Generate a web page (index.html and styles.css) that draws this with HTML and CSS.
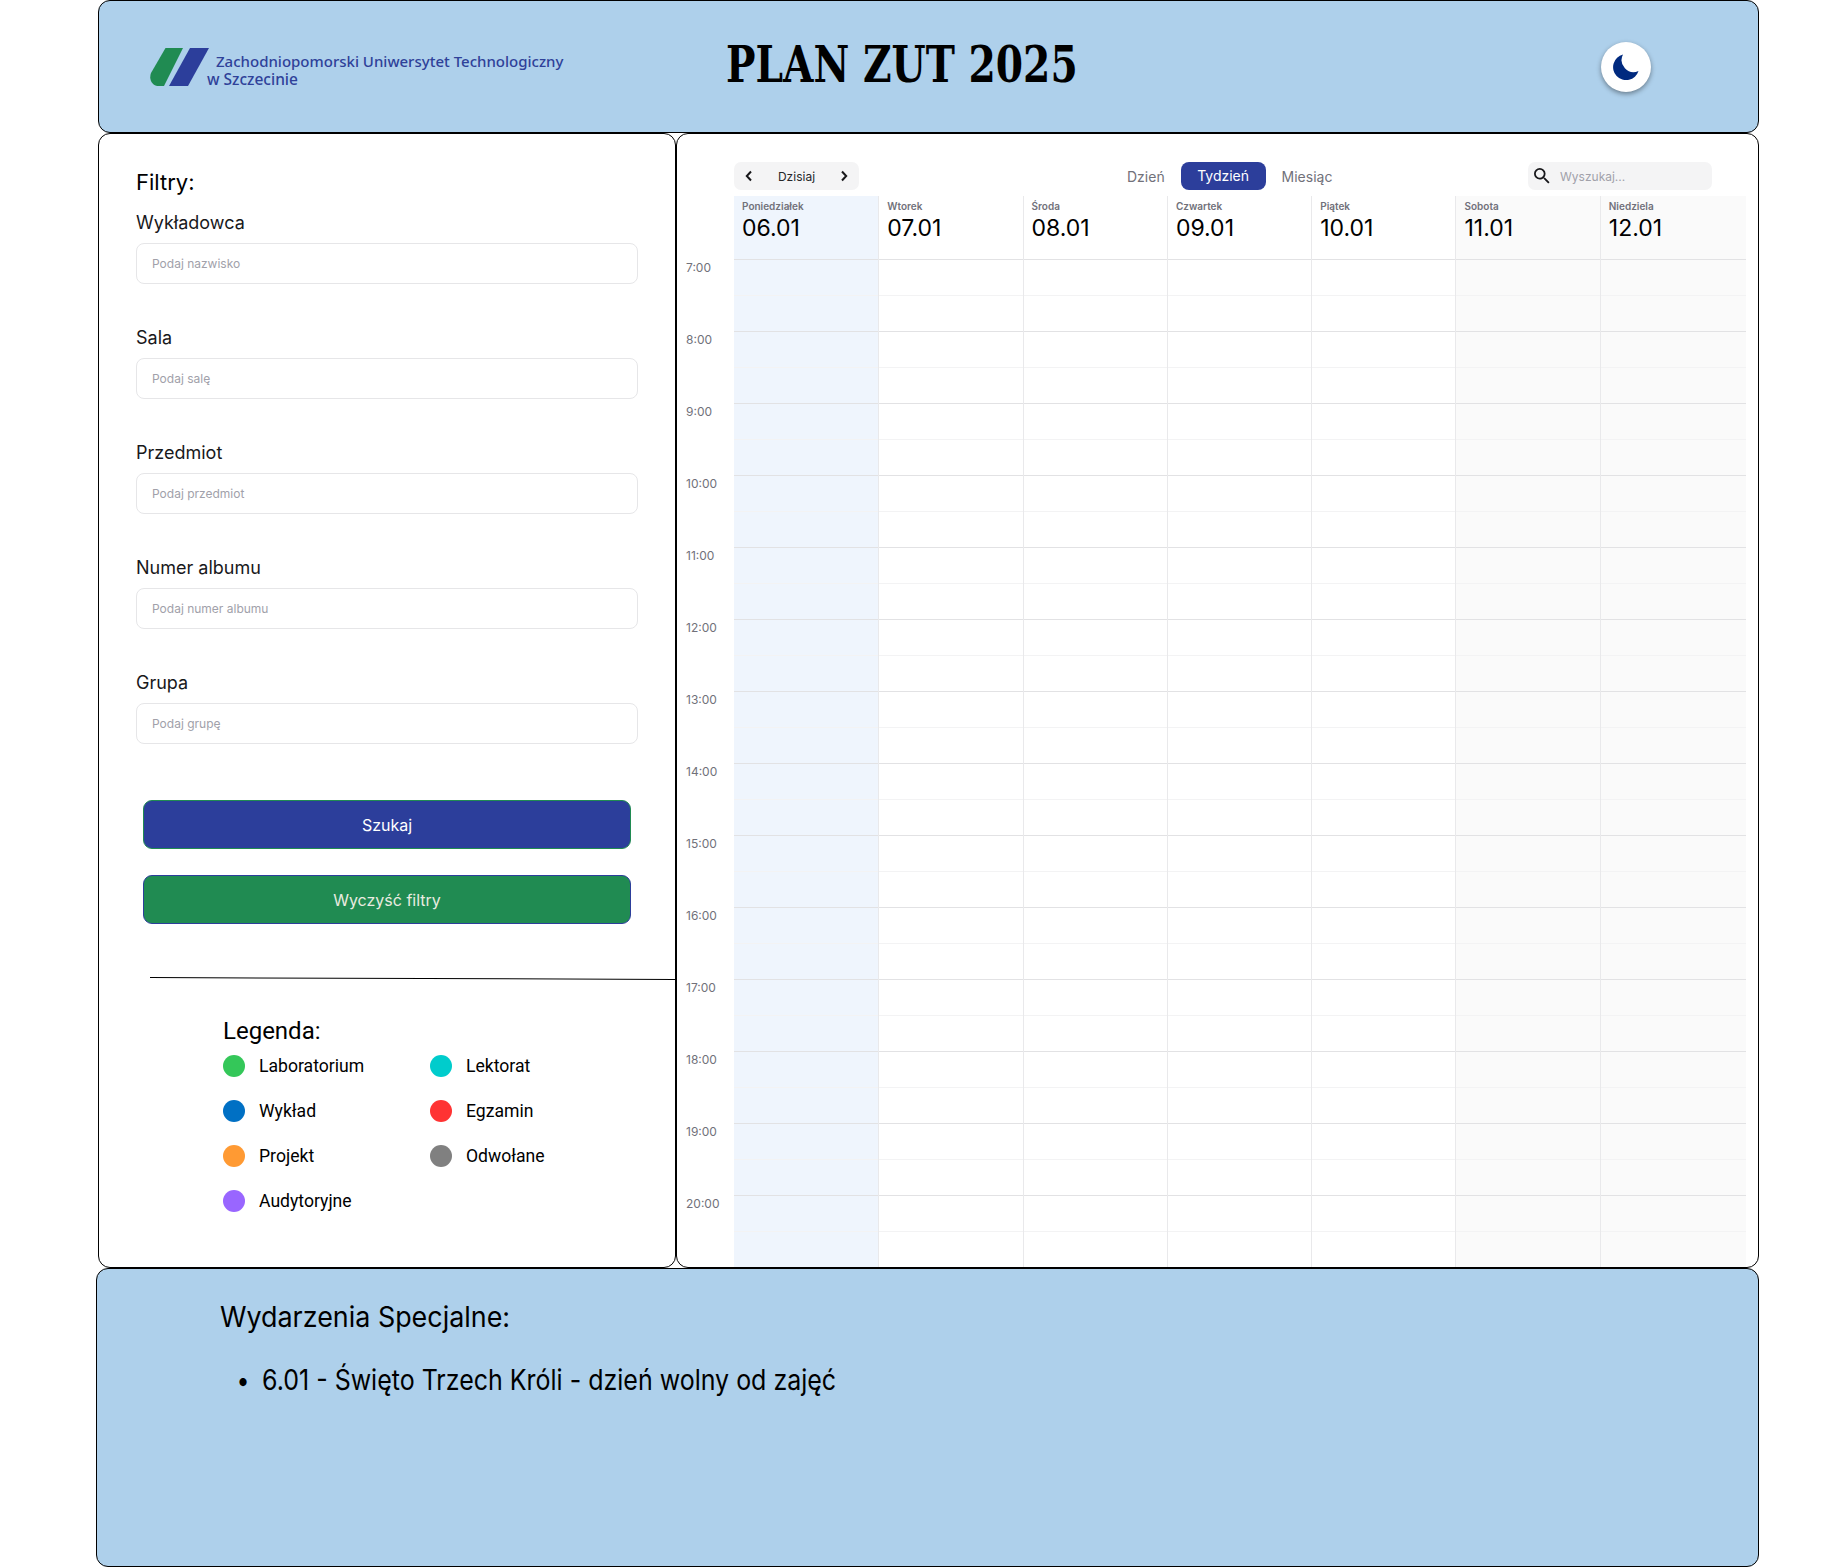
FILE: index.html
```html
<!DOCTYPE html>
<html lang="pl">
<head>
    <meta charset="UTF-8">
    <meta name="viewport" content="width=device-width, initial-scale=1.0">
    <title>Plan ZUT 2025</title>
    <link rel="stylesheet" href="styles.css">
</head>
<body>
    <div class="page">

        <header class="top">
            <div class="brand">
                <svg class="brand-logo" viewBox="0 0 59 38" aria-hidden="true">
                    <path fill="#208b52" d="M15.500 0H33L14 38H9C2.500 38 -1.500 32 1 25Z"/>
                    <path fill="#2c3e9b" d="M40 0H59L38 38H19Z"/>
                </svg>
                <div class="brand-name">
                    <div class="brand-line1">Zachodniopomorski Uniwersytet Technologiczny</div>
                    <div class="brand-line2">w Szczecinie</div>
                </div>
            </div>
            <h1>PLAN ZUT 2025</h1>
            <button class="theme-btn" aria-label="Tryb ciemny">
                <svg viewBox="0 0 26 26" width="26" height="26" aria-hidden="true">
                    <path fill="#002a7f" d="M10 .5A13 13 0 1 0 25.500 17 12 12 0 0 1 10 .5Z"/>
                </svg>
            </button>
        </header>

        <main class="main">
            <aside class="filters">
                <h2>Filtry:</h2>
                <form class="filter-form">
                    <div class="field">
                        <label for="f1">Wykładowca</label>
                        <input id="f1" type="text" placeholder="Podaj nazwisko">
                    </div>
                    <div class="field">
                        <label for="f2">Sala</label>
                        <input id="f2" type="text" placeholder="Podaj salę">
                    </div>
                    <div class="field">
                        <label for="f3">Przedmiot</label>
                        <input id="f3" type="text" placeholder="Podaj przedmiot">
                    </div>
                    <div class="field">
                        <label for="f4">Numer albumu</label>
                        <input id="f4" type="text" placeholder="Podaj numer albumu">
                    </div>
                    <div class="field">
                        <label for="f5">Grupa</label>
                        <input id="f5" type="text" placeholder="Podaj grupę">
                    </div>
                </form>
                <div class="actions">
                    <button class="btn btn-search">Szukaj</button>
                    <button class="btn btn-clear">Wyczyść filtry</button>
                </div>
                <div class="divider"></div>
                <section class="legend">
                    <h3>Legenda:</h3>
                    <ul class="legend-list">
                        <li><span class="dot dot-lab"></span>Laboratorium</li>
                        <li><span class="dot dot-lecture"></span>Wykład</li>
                        <li><span class="dot dot-project"></span>Projekt</li>
                        <li><span class="dot dot-aud"></span>Audytoryjne</li>
                        <li><span class="dot dot-lang"></span>Lektorat</li>
                        <li><span class="dot dot-exam"></span>Egzamin</li>
                        <li><span class="dot dot-off"></span>Odwołane</li>
                    </ul>
                </section>
            </aside>

            <section class="calendar">
                <div class="toolbar">
                    <div class="nav">
                        <svg viewBox="0 0 10 12" width="10" height="12" aria-hidden="true"><path d="M7 1.500 2.800 6 7 10.500" fill="none" stroke="#18181b" stroke-width="2"/></svg>
                        <span>Dzisiaj</span>
                        <svg viewBox="0 0 10 12" width="10" height="12" aria-hidden="true"><path d="M3 1.500 7.200 6 3 10.500" fill="none" stroke="#18181b" stroke-width="2"/></svg>
                    </div>
                    <div class="views">
                        <span>Dzień</span>
                        <span class="view-active">Tydzień</span>
                        <span>Miesiąc</span>
                    </div>
                    <div class="search">
                        <svg viewBox="3 3 18 18" width="16" height="16" aria-hidden="true"><path fill="#18181b" d="M15.500 14h-.79l-.28-.27A6.471 6.471 0 0 0 16 9.500 6.500 6.500 0 1 0 9.500 16c1.610 0 3.090-.59 4.230-1.570l.27.28v.79l5 4.990L20.490 19l-4.990-5zm-6 0C7.010 14 5 11.990 5 9.500S7.010 5 9.500 5 14 7.010 14 9.500 11.990 14 9.500 14z"/></svg>
                        <span>Wyszukaj...</span>
                    </div>
                </div>

                <div class="week">
                    <div class="times">
                        <div class="times-head"></div>
                        <div class="time">7:00</div>
                        <div class="time">8:00</div>
                        <div class="time">9:00</div>
                        <div class="time">10:00</div>
                        <div class="time">11:00</div>
                        <div class="time">12:00</div>
                        <div class="time">13:00</div>
                        <div class="time">14:00</div>
                        <div class="time">15:00</div>
                        <div class="time">16:00</div>
                        <div class="time">17:00</div>
                        <div class="time">18:00</div>
                        <div class="time">19:00</div>
                        <div class="time">20:00</div>
                    </div>
                    <div class="day day-today">
                        <div class="day-head"><div class="day-name">Poniedziałek</div><div class="day-date">06.01</div></div>
                        <div class="day-body"></div>
                    </div>
                    <div class="day">
                        <div class="day-head"><div class="day-name">Wtorek</div><div class="day-date">07.01</div></div>
                        <div class="day-body"></div>
                    </div>
                    <div class="day">
                        <div class="day-head"><div class="day-name">Środa</div><div class="day-date">08.01</div></div>
                        <div class="day-body"></div>
                    </div>
                    <div class="day">
                        <div class="day-head"><div class="day-name">Czwartek</div><div class="day-date">09.01</div></div>
                        <div class="day-body"></div>
                    </div>
                    <div class="day">
                        <div class="day-head"><div class="day-name">Piątek</div><div class="day-date">10.01</div></div>
                        <div class="day-body"></div>
                    </div>
                    <div class="day day-weekend">
                        <div class="day-head"><div class="day-name">Sobota</div><div class="day-date">11.01</div></div>
                        <div class="day-body"></div>
                    </div>
                    <div class="day day-weekend">
                        <div class="day-head"><div class="day-name">Niedziela</div><div class="day-date">12.01</div></div>
                        <div class="day-body"></div>
                    </div>
                </div>
            </section>
        </main>

        <footer class="events">
            <h2>Wydarzenia Specjalne:</h2>
            <ul>
                <li>6.01 - Święto Trzech Króli - dzień wolny od zajęć</li>
            </ul>
        </footer>

    </div>
</body>
</html>
```

FILE: styles.css
```css
* {
    box-sizing: border-box;
}
body {
    margin: 0;
    background-color: #fff;
    color: #000;
    font-family: Inter, "Liberation Sans", sans-serif;
}
.page {
    width: 1663px;
    margin-left: 96px;
}

/* top bar */
.top {
    display: flex;
    align-items: center;
    height: 133px;
    margin-left: 2px;
    padding-left: 51px;
    background-color: #aed0eb;
    border: 1px solid #000;
    border-radius: 12px;
}
.brand {
    display: flex;
    align-items: flex-start;
    flex: none;
    width: 576px;
}
.brand-logo {
    flex: none;
    width: 59px;
    height: 38px;
    margin-top: 3px;
}
.brand-name {
    margin: 8px 0 0 -2px;
    font-family: "Noto Sans", sans-serif;
    font-size: 15px;
    font-weight: 500;
    line-height: 17.5px;
    color: #2f4199;
    white-space: nowrap;
}
.brand-line1 {
    padding-left: 9px;
}
.brand-line2 {
    font-size: 15.5px;
}
.top h1 {
    margin: 0 0 3px;
    font-family: "DejaVu Serif", serif;
    font-size: 50px;
    font-weight: 700;
    line-height: 56px;
    white-space: nowrap;
    transform: scaleX(0.784);
    transform-origin: left;
}
.theme-btn {
    display: flex;
    align-items: center;
    justify-content: center;
    width: 50px;
    height: 50px;
    margin-left: auto;
    margin-right: 107px;
    padding: 0;
    background-color: #fff;
    border: 0;
    border-radius: 50%;
    box-shadow: 0 2px 5px rgba(0, 0, 0, 0.4);
}

/* main area */
.main {
    display: flex;
    height: 1135px;
    margin-left: 2px;
}
.filters {
    flex: none;
    width: 578px;
    padding: 34px 37px 0 37px;
    border: 1px solid #000;
    border-radius: 12px;
}
.filters h2 {
    margin: 0 0 14px;
    font-size: 22px;
    font-weight: 400;
    line-height: 28px;
}
.filter-form {
    display: flex;
    flex-direction: column;
    gap: 41px;
}
.field label {
    display: block;
    margin-bottom: 8px;
    padding-top: 1px;
    font-size: 18px;
    line-height: 24px;
    color: #18181b;
}
.field input {
    display: block;
    width: 100%;
    height: 41px;
    padding: 0 15px;
    font-family: inherit;
    font-size: 12px;
    background-color: #fff;
    border: 1.5px solid #e6e6e8;
    border-radius: 8px;
}
.field input::placeholder {
    color: #a1a1aa;
}
.actions {
    display: flex;
    flex-direction: column;
    gap: 26px;
    margin: 56px 7px 0;
}
.btn {
    height: 49px;
    font-family: inherit;
    font-size: 16px;
    border-radius: 9px;
}
.btn-search {
    color: #fff;
    background-color: #2c3e9b;
    border: 1px solid #208b52;
}
.btn-clear {
    color: #e9ebe0;
    background-color: #208b52;
    border: 1px solid #2c3e9b;
}
.divider {
    height: 1px;
    margin: 54px -37px 0 14px;
    background-color: #000;
    transform: rotate(0.2deg);
}
.legend {
    margin-top: 37px;
    padding-left: 87px;
}
.legend h3 {
    margin: 0 0 9px;
    font-family: Roboto, sans-serif;
    font-size: 24px;
    font-weight: 400;
    line-height: 30px;
}
.legend-list {
    display: grid;
    grid-auto-flow: column;
    grid-template-rows: repeat(4, 22px);
    grid-template-columns: 207px 1fr;
    row-gap: 23px;
    margin: 0;
    padding: 0;
    list-style: none;
    font-family: Roboto, sans-serif;
    font-size: 17.6px;
}
.legend-list li {
    display: flex;
    align-items: center;
    gap: 14px;
}
.dot {
    flex: none;
    width: 22px;
    height: 22px;
    border-radius: 50%;
}
.dot-lab { background-color: #34c759; }
.dot-lecture { background-color: #0070c4; }
.dot-project { background-color: #ff9a33; }
.dot-aud { background-color: #9966ff; }
.dot-lang { background-color: #00cccc; }
.dot-exam { background-color: #ff3333; }
.dot-off { background-color: #808080; }

/* calendar */
.calendar {
    flex: 1;
    min-width: 0;
    padding-top: 28px;
    border: 1px solid #000;
    border-radius: 12px;
    overflow: hidden;
}
.toolbar {
    display: flex;
    align-items: center;
    height: 28px;
    margin-bottom: 6px;
    padding: 0 46px 0 57px;
    font-size: 14px;
}
.nav {
    display: flex;
    align-items: center;
    justify-content: space-between;
    flex: none;
    width: 125px;
    height: 28px;
    padding: 0 10px;
    font-size: 12px;
    background-color: #f4f4f5;
    border-radius: 7px;
    color: #27272a;
}
.views {
    display: flex;
    align-items: center;
    gap: 16px;
    margin-left: 268px;
    color: #71717a;
}
.view-active {
    padding: 0 16.5px;
    line-height: 28px;
    color: #fff;
    background-color: #2c3e9b;
    border-radius: 8px;
}
.search {
    display: flex;
    align-items: center;
    gap: 10px;
    flex: none;
    width: 184px;
    height: 28px;
    margin-left: auto;
    padding-left: 6px;
    font-size: 12px;
    color: #a1a1aa;
    background-color: #f4f4f5;
    border-radius: 7px;
}
.week {
    display: grid;
    grid-template-columns: 57px repeat(6, 144.3px) 1fr;
    padding-right: 12px;
}
.times-head {
    height: 64px;
}
.time {
    height: 72px;
    padding-left: 9px;
    font-size: 12px;
    line-height: 15px;
    color: #71717a;
}
.day {
    border-left: 1px solid #e9e9eb;
}
.day-today {
    background-color: #eff5fd;
    border-left: 0;
}
.day-weekend {
    background-color: #fafafa;
}
.day-head {
    height: 64px;
    padding: 4px 8px 0;
    border-bottom: 1px solid #e2e2e4;
}
.day-name {
    font-size: 10px;
    font-weight: 600;
    line-height: 12px;
    color: #71717a;
}
.day-date {
    margin-top: 2px;
    font-size: 23px;
    line-height: 28px;
}
.day-body {
    height: 1008px;
    background-image:
        linear-gradient(#f3f3f4 1px, transparent 1px),
        linear-gradient(#e2e2e4 1px, transparent 1px);
    background-position: 0 35px, 0 71px;
    background-size: 100% 72px;
}

/* bottom panel */
.events {
    height: 299px;
    padding: 31px 0 0 123px;
    background-color: #aed0eb;
    border: 1px solid #000;
    border-radius: 12px;
}
.events h2 {
    margin: 0 0 29px;
    font-size: 28px;
    font-weight: 400;
    line-height: 34px;
    transform: scaleX(0.96);
    transform-origin: left;
}
.events ul {
    margin: 0;
    padding-left: 42px;
    font-size: 28px;
    line-height: 34px;
}
.events li {
    transform: scaleX(0.892);
    transform-origin: left;
}
.events li::marker {
    content: "•\00a0\00a0";
    font-size: 26px;
}
```
